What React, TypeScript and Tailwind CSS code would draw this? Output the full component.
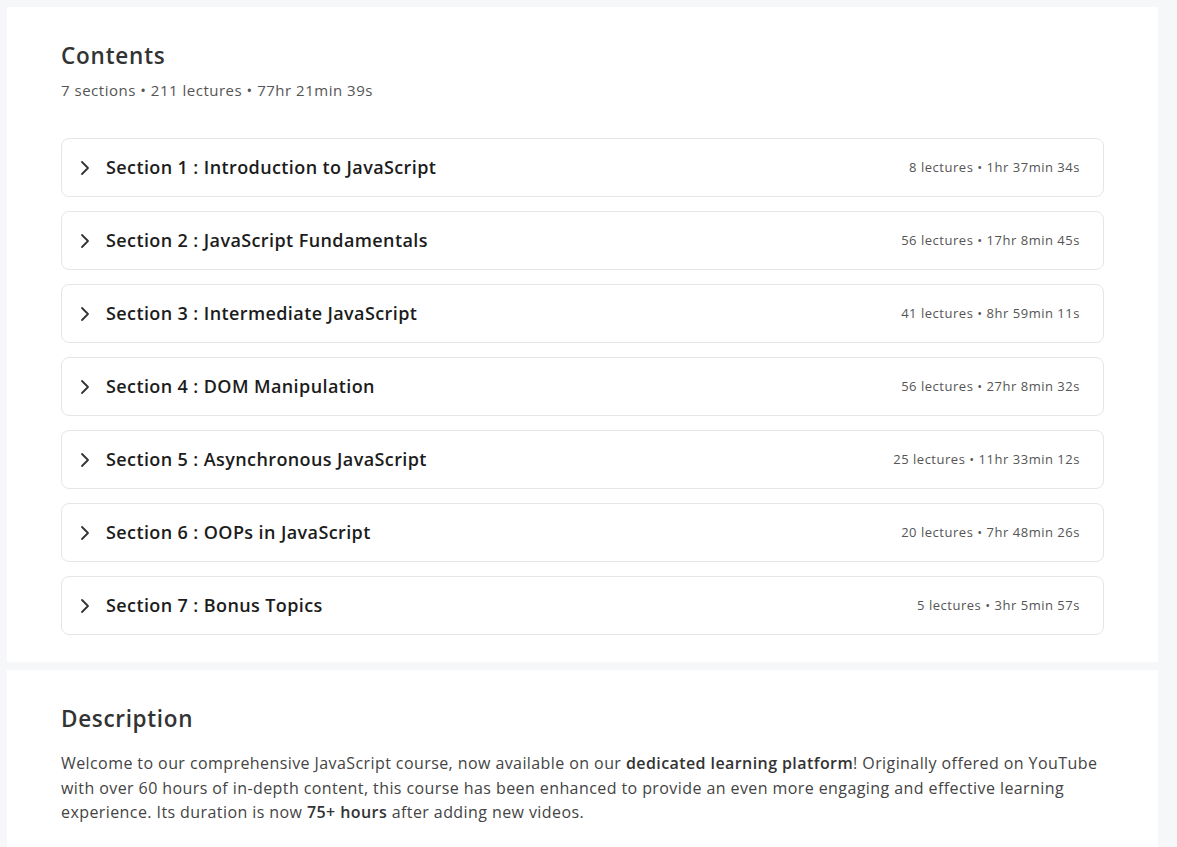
import { ChevronRight } from "lucide-react";

const sections = [
    { title: "Section 1 : Introduction to JavaScript", meta: "8 lectures • 1hr 37min 34s" },
    { title: "Section 2 : JavaScript Fundamentals", meta: "56 lectures • 17hr 8min 45s" },
    { title: "Section 3 : Intermediate JavaScript", meta: "41 lectures • 8hr 59min 11s" },
    { title: "Section 4 : DOM Manipulation", meta: "56 lectures • 27hr 8min 32s" },
    { title: "Section 5 : Asynchronous JavaScript", meta: "25 lectures • 11hr 33min 12s" },
    { title: "Section 6 : OOPs in JavaScript", meta: "20 lectures • 7hr 48min 26s" },
    { title: "Section 7 : Bonus Topics", meta: "5 lectures • 3hr 5min 57s" },
];

export default function App() {
    return (
        <div className="min-h-screen bg-[#f6f7f9] pl-[7px] pr-[19px] pt-[7px] font-['Open_Sans',sans-serif]">
            {/* contents card */}
            <div className="bg-white px-[54px] pt-[33px] pb-[27px]">
                <h2 className="text-[22.5px] leading-[32px] font-semibold tracking-[0.035em] text-[#333]">Contents</h2>
                <div className="mt-[7px] text-[15px] leading-[22px] tracking-[0.034em] text-[#555]">
                    7 sections • 211 lectures • 77hr 21min 39s
                </div>
                <div className="mt-[37px] flex flex-col gap-[14px]">
                    {sections.map((s) => (
                        <div
                            key={s.title}
                            className="h-[59px] flex items-center justify-between rounded-lg border border-[#e6e6e6] pl-[11px] pr-[23px]"
                        >
                            <div className="flex items-center gap-[9px]">
                                <ChevronRight className="h-6 w-6 text-[#333]" strokeWidth={1.8} />
                                <span className="text-[18px] font-semibold tracking-[0.022em] text-[#1c1c1c]">{s.title}</span>
                            </div>
                            <span className="text-[13px] tracking-[0.04em] text-[#555]">{s.meta}</span>
                        </div>
                    ))}
                </div>
            </div>

            {/* description card */}
            <div className="mt-[8px] bg-white px-[54px] pt-[33px] pb-[40px]">
                <h2 className="text-[22.5px] leading-[32px] font-semibold tracking-[0.03em] text-[#333]">Description</h2>
                <p className="mt-[16px] text-[16px] leading-[24.5px] tracking-[0.026em] text-[#444]">
                    Welcome to our comprehensive JavaScript course, now available on our{" "}
                    <strong className="font-semibold text-[#333]">dedicated learning platform</strong>! Originally offered on YouTube
                    with over 60 hours of in-depth content, this course has been enhanced to provide an even more engaging and
                    effective learning experience. Its duration is now <strong className="font-semibold text-[#333]">75+ hours</strong>{" "}
                    after adding new videos.
                </p>
            </div>
        </div>
    );
}
